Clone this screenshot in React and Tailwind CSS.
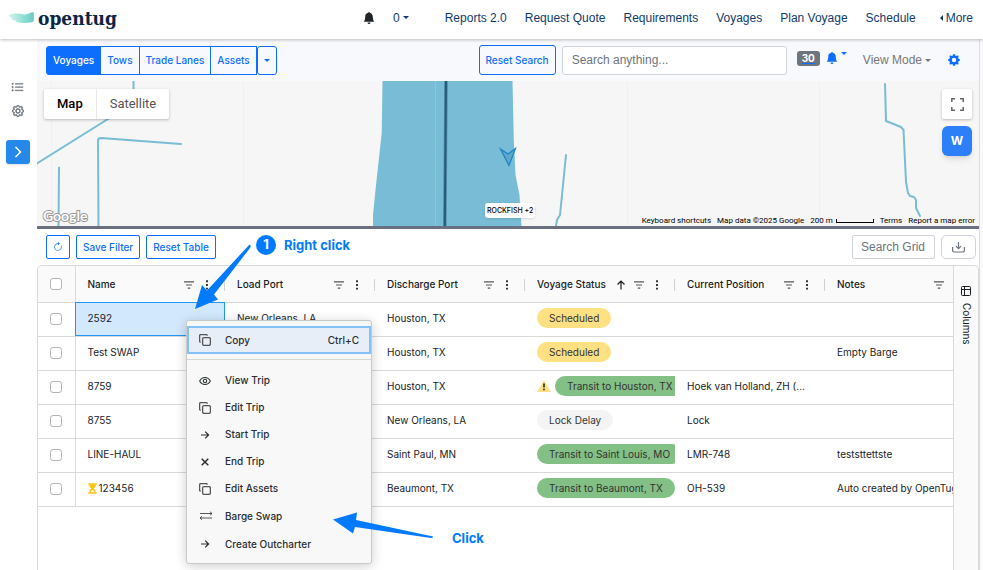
import React from "react";
import { BsBellFill, BsGear, BsGearFill, BsListUl, BsArrowClockwise } from "react-icons/bs";

const navLinks = ["Reports 2.0", "Request Quote", "Requirements", "Voyages", "Plan Voyage", "Schedule"];

const columns = ["Name", "Load Port", "Discharge Port", "Voyage Status", "Current Position", "Notes"];

const rows = [
  { name: "2592", load: "New Orleans, LA", discharge: "Houston, TX", status: "Scheduled", tone: "yellow", position: "", notes: "", selected: true },
  { name: "Test SWAP", load: "", discharge: "Houston, TX", status: "Scheduled", tone: "yellow", position: "", notes: "Empty Barge" },
  { name: "8759", load: "", discharge: "Houston, TX", status: "Transit to Houston, TX", tone: "green", warn: true, position: "Hoek van Holland, ZH (...", notes: "" },
  { name: "8755", load: "", discharge: "New Orleans, LA", status: "Lock Delay", tone: "gray", position: "Lock", notes: "" },
  { name: "LINE-HAUL", load: "", discharge: "Saint Paul, MN", status: "Transit to Saint Louis, MO", tone: "green", position: "LMR-748", notes: "teststtettste" },
  { name: "123456", load: "", discharge: "Beaumont, TX", status: "Transit to Beaumont, TX", tone: "green", waiting: true, position: "OH-539", notes: "Auto created by OpenTug" },
];

const tones = {
  yellow: "bg-[#ffe083]",
  green: "bg-[#83c086]",
  gray: "bg-[#f4f4f4]",
};

function Caret({ className = "" }) {
  return (
    <svg viewBox="0 0 6 3" className={`h-[3px] w-[6px] shrink-0 ${className}`} fill="currentColor" aria-hidden="true">
      <path d="M0 0h6L3 3z" />
    </svg>
  );
}

function FilterIcon() {
  return (
    <svg viewBox="0 0 10 8" className="h-2 w-[10px] shrink-0 text-[#555]" stroke="currentColor" strokeWidth="1.2" aria-hidden="true">
      <path d="M0 .8h10M2 4h6M3.7 7.2h2.6" />
    </svg>
  );
}

function DotsIcon() {
  return (
    <svg viewBox="0 0 4 10" className="h-[10px] w-1 shrink-0 text-[#222]" fill="currentColor" aria-hidden="true">
      <path d="M1.1.3h1.8v1.9H1.1zM1.1 4h1.8v1.9H1.1zM1.1 7.7h1.8v1.9H1.1z" />
    </svg>
  );
}

function HourglassIcon() {
  return (
    <svg viewBox="0 0 9 11" className="h-[11px] w-[9px] shrink-0" fill="#ffc107" aria-label="Waiting">
      <path d="M.3.3h8.400v1.500H.3zM.3 9.200h8.400v1.500H.3z" />
      <path d="M1.200 1.500h6.600c0 2-.9 3-2.300 4 1.400 1 2.300 2 2.300 4H6.600C6.400 8.200 5.600 7.600 4.500 7.100 3.400 7.600 2.600 8.200 2.400 9.500H1.200c0-2 .9-3 2.300-4-1.400-1-2.300-2-2.300-4z" />
    </svg>
  );
}

function CopyIcon() {
  return (
    <svg viewBox="0 0 12 12" className="h-3 w-3 text-[#555]" fill="none" stroke="currentColor" strokeWidth="1.3" aria-hidden="true">
      <rect x="3.6" y="3.6" width="7.8" height="7.8" rx="1.4" />
      <path d="M1.8 8.2H1.6A1 1 0 0 1 .6 7.200V1.600a1 1 0 0 1 1-1h5.600a1 1 0 0 1 1 1v.2" />
    </svg>
  );
}

function EyeIcon() {
  return (
    <svg viewBox="0 0 12 12" className="h-3 w-3" fill="none" stroke="currentColor" strokeWidth="1.1" aria-hidden="true">
      <path d="M.7 6C1.900 3.600 3.800 2.500 6 2.500S10.100 3.600 11.300 6C10.100 8.400 8.200 9.500 6 9.500S1.900 8.400.7 6z" />
      <circle cx="6" cy="6" r="1.700" />
    </svg>
  );
}

function ArrowIcon() {
  return (
    <svg viewBox="0 0 12 12" className="h-3 w-3" fill="none" stroke="currentColor" strokeWidth="1.2" aria-hidden="true">
      <path d="M2 6h7.600M6.200 2.600 9.600 6 6.200 9.400" />
    </svg>
  );
}

function CrossIcon() {
  return (
    <svg viewBox="0 0 12 12" className="h-3 w-3" fill="none" stroke="currentColor" strokeWidth="1.500" aria-hidden="true">
      <path d="M2.700 2.700l6.600 6.600M9.300 2.700 2.700 9.300" />
    </svg>
  );
}

function SwapIcon() {
  return (
    <svg viewBox="0 0 14 12" className="h-3 w-[14px]" fill="none" stroke="currentColor" strokeWidth=".8" aria-hidden="true">
      <path d="M1 3.500h12M11 1.700 13 3.500l-2 1.800M13 8H1M3 6.200 1 8l2 1.800" />
    </svg>
  );
}

const menuItems = [
  { label: "View Trip", icon: EyeIcon, height: "h-[27px]" },
  { label: "Edit Trip", icon: CopyIcon, height: "h-[27px]" },
  { label: "Start Trip", icon: ArrowIcon, height: "h-[27px]" },
  { label: "End Trip", icon: CrossIcon, height: "h-[27px]" },
  { label: "Edit Assets", icon: CopyIcon, height: "h-[27px]" },
  { label: "Barge Swap", icon: SwapIcon, height: "h-7" },
  { label: "Create Outcharter", icon: ArrowIcon, height: "h-7" },
];

function Header() {
  return (
    <header className="relative z-10 flex h-[39px] shrink-0 items-center bg-white pr-[10px] pl-2 font-['Liberation_Sans',sans-serif] text-[12px] text-[#0f3b6c] shadow-[0_1px_3px_rgba(0,0,0,0.25)]">
      <a href="#home" className="flex items-center gap-1 pb-1">
        <svg viewBox="0 0 26 12" className="h-3 w-[26px]" aria-hidden="true">
          <defs>
            <linearGradient id="wave" x1="0" x2="1">
              <stop offset="0" stopColor="#d3f3ec" />
              <stop offset=".6" stopColor="#8fdfd5" />
              <stop offset="1" stopColor="#68c9c4" />
            </linearGradient>
          </defs>
          <path d="M.5 3.500C3 1.500 8 1 13 2c4 .8 7 .3 9.500-1.200 2-1 3.300-.8 3.300.7v6c0 1.800-.8 2.400-2.500 2.800-5 1.200-13 .8-15.500-.8 1.500-.2 1-.9-.8-1.100C3.500 8 1.800 6.500 4.500 6.300 2.500 5.500 1 4.800.5 3.500z" fill="url(#wave)" />
        </svg>
        <span className="font-['DejaVu_Serif_Condensed','DejaVu_Serif',serif] text-[19px] leading-6 font-bold text-[#0b2545]">opentug</span>
      </a>
      <nav className="ml-auto flex items-center gap-[18px] pb-1">
        <BsBellFill className="h-3 w-3 text-[#212529]" />
        <button type="button" className="mr-[18px] flex items-center gap-[3px]">
          0 <Caret />
        </button>
        {navLinks.map((l) => (
          <a key={l} href="#nav">{l}</a>
        ))}
        <a href="#more" className="ml-[6px] flex items-center gap-[3px]">
          <svg viewBox="0 0 3 6" className="h-[6px] w-[3px]" fill="currentColor" aria-hidden="true"><path d="M3 0v6L0 3z" /></svg>
          More
        </a>
      </nav>
    </header>
  );
}

function Toolbar() {
  return (
    <div className="flex h-[42px] shrink-0 items-center bg-[#f8f9fc] pr-[19px] pl-[9px]">
      <div className="flex h-[29px] text-[10px] font-medium text-[#0d6efd]">
        <button type="button" className="rounded-l-[3px] border border-[#0d6efd] bg-[#0d6efd] px-[6px] text-white">Voyages</button>
        <button type="button" className="-ml-px border border-[#0d6efd] px-[6px]">Tows</button>
        <button type="button" className="-ml-px border border-[#0d6efd] px-[6px]">Trade Lanes</button>
        <button type="button" className="-ml-px border border-[#0d6efd] px-[6px]">Assets</button>
        <button type="button" aria-label="More views" className="rounded-[3px] border border-[#0d6efd] px-[6px]"><Caret /></button>
      </div>
      <button type="button" className="ml-auto h-[30px] rounded-[3px] border border-[#0d6efd] px-[6px] text-[10px] font-medium text-[#0d6efd]">Reset Search</button>
      <input aria-label="Search anything" placeholder="Search anything..." className="ml-[6px] h-[29px] w-[225px] rounded-[3px] border border-[#ced4da] bg-white px-[9px] font-['Liberation_Sans',sans-serif] text-[12px] placeholder:text-[#6c757d]" />
      <button type="button" className="ml-[10px] flex items-start pb-1">
        <span className="rounded-[3px] bg-[#6c757d] px-[5px] text-[10px] leading-[15px] font-bold text-white underline decoration-[#0d6efd]">30</span>
        <BsBellFill className="mt-px ml-[6px] h-3 w-3 text-[#0d6efd]" />
        <Caret className="mt-px ml-[3px] text-[#0d6efd]" />
      </button>
      <button type="button" className="ml-4 flex items-center gap-[3px] font-['Liberation_Sans',sans-serif] text-[12px] text-[#777]">View Mode <Caret /></button>
      <button type="button" aria-label="Settings" className="ml-[17px] text-[#0d6efd]"><BsGearFill className="h-3 w-3" /></button>
    </div>
  );
}

function VoyageMap() {
  return (
    <section aria-label="Map" className="relative h-[145px] shrink-0 overflow-hidden bg-[#f6f6f6]">
      <svg viewBox="37 81 942 145" preserveAspectRatio="xMidYMid slice" className="absolute inset-0 h-full w-full" fill="none" aria-hidden="true">
        <path d="M51.500 81v145M243.500 81v145M627.500 81v145M819.500 81v145" stroke="#f0f0f0" />
        <path d="M382.500 81 381.700 133 375.500 190 373 215V226H521.500L519.500 195 515.500 175 513.800 140 512.500 81z" fill="#78bdd5" />
        <path d="M435.500 81v145" stroke="#8ac6db" />
        <path d="M446 81 444.800 226" stroke="#4f8fae" strokeWidth="3.600" />
        <path d="M446 81 444.800 226" stroke="#285a7a" strokeWidth="2" />
        <g stroke="#78bdd5" strokeWidth="2" strokeLinejoin="round" strokeLinecap="round">
          <path d="M133.500 81V103L108 119 37 163.500M59 167.500 58.500 226M181 144 101 138Q98 138 98 141L98.500 226" />
          <path d="M566 155 562 195 560 215 557 220 556 226M885 84 886 121 901 127 903.500 130 906 182 908 193 910 196 914 197 916 200 916 208 920 216" />
        </g>
        <path d="M500.500 149 508 154 515.500 148.500 509 165.500z" fill="#5fa6c9" stroke="#1c83cb" strokeWidth="1.200" />
      </svg>

      <div className="absolute top-2 left-[7px] flex h-[30px] divide-x divide-[#e9e9e9] rounded-[2px] bg-white font-['Roboto',sans-serif] text-[13px] shadow-[0_1px_3px_rgba(0,0,0,0.25)]">
        <button type="button" className="px-[13px] font-medium text-black">Map</button>
        <button type="button" className="px-[13px] text-[#565656]">Satellite</button>
      </div>
      <button type="button" aria-label="Full screen" className="absolute top-2 right-[7px] flex h-[30px] w-[30px] items-center justify-center rounded-[2px] bg-white shadow-[0_1px_3px_rgba(0,0,0,0.25)]">
        <svg viewBox="0 0 13 13" className="h-[13px] w-[13px]" fill="none" stroke="#666" strokeWidth="1.500" aria-hidden="true"><path d="M.8 4V.8H4M9 .8h3.200V4M12.200 9v3.200H9M4 12.200H.8V9" /></svg>
      </button>
      <button type="button" className="absolute top-[45px] right-[7px] h-[30px] w-[30px] rounded-[6px] bg-[#2d7ff9] text-[12px] font-bold text-white shadow-md">W</button>
      <span className="absolute top-[122px] left-[448px] rounded-[3px] bg-white px-[2px] text-[7px] leading-[15px] font-medium text-black shadow">ROCKFISH +2</span>
      <span className="absolute bottom-0 left-[6px] font-['Lato',sans-serif] text-[14px] leading-5 font-bold text-white [-webkit-text-stroke:2px_#999] [paint-order:stroke_fill]">Google</span>
      <div className="absolute right-1 bottom-0 flex items-center gap-[6px] font-['Roboto',sans-serif] text-[8px] leading-[11px] text-black">
        <button type="button">Keyboard shortcuts</button>
        <span>Map data ©2025 Google</span>
        <span className="flex items-center gap-[3px]">200 m <i className="h-1 w-[38px] border border-t-0 border-black" /></span>
        <a href="#terms">Terms</a>
        <a href="#report">Report a map error</a>
      </div>
    </section>
  );
}

function GridActions() {
  const outline = "h-6 rounded-[2px] border border-[#0d6efd] px-[6px] text-[10px] font-medium text-[#0d6efd]";
  return (
    <div className="flex h-9 shrink-0 items-center gap-[6px] pr-[3px] pl-[9px]">
      <button type="button" aria-label="Refresh" className={outline}><BsArrowClockwise className="h-[10px] w-[10px]" /></button>
      <button type="button" className={outline}>Save Filter</button>
      <button type="button" className={outline}>Reset Table</button>
      <input aria-label="Search Grid" placeholder="Search Grid" className="ml-auto h-6 w-[83px] rounded-[2px] border border-[#ced4da] px-[8px] font-['Liberation_Sans',sans-serif] text-[12px] placeholder:text-[#6c757d]" />
      <button type="button" aria-label="Download" className="flex h-6 w-[35px] items-center justify-center rounded-[5px] border border-[#d0d3dc] text-[#6c757d]">
        <svg viewBox="0 0 13 12" className="h-3 w-[13px]" fill="none" stroke="currentColor" strokeWidth="1.200" aria-hidden="true"><path d="M.6 6v3.600q0 1.400 1.400 1.400h9q1.400 0 1.400-1.400V6M6.500 1v6.500M4 5.200l2.500 2.500L9 5.200" /></svg>
      </button>
    </div>
  );
}

function Check({ label }) {
  return <input type="checkbox" aria-label={label} className="ml-3 block h-3 w-3 appearance-none rounded-[3px] border border-[#b5b5b5] bg-white" />;
}

function VoyageTable() {
  return (
    <table className="w-full table-fixed border-collapse text-left text-[10px] text-[#181d1f]">
      <colgroup>
        <col className="w-[37px]" />
        <col className="w-[150px]" />
        <col className="w-[150px]" />
        <col className="w-[150px]" />
        <col className="w-[150px]" />
        <col className="w-[150px]" />
        <col />
      </colgroup>
      <thead>
        <tr className="h-9 border-b border-[#d9d9d9] bg-[#fafafa]">
          <th className="border-r border-[#d9d9d9] p-0"><Check label="Select all" /></th>
          {columns.map((c, i) => (
            <th key={c} className="p-0 pt-0.5 font-medium">
              <div className={`flex h-3 items-center gap-[11px] pl-3 ${i === 5 ? "pr-[9px]" : "border-r border-[#d0d0d0] pr-[15px]"}`}>
                <span className="flex-1 whitespace-nowrap">{c}</span>
                {i === 3 && (
                  <svg viewBox="0 0 10 10" className="-mx-[3px] h-[10px] w-[10px] shrink-0" fill="none" stroke="currentColor" strokeWidth="1.200" aria-label="Sorted ascending"><path d="M5 9.500V1M1.500 4.500 5 1l3.500 3.500" /></svg>
                )}
                <FilterIcon />
                {i !== 5 && <DotsIcon />}
              </div>
            </th>
          ))}
        </tr>
      </thead>
      <tbody>
        {rows.map((r) => (
          <tr key={r.name} className="h-[34px] border-b border-[#d9d9d9]">
            <td className="border-r border-[#d9d9d9] p-0"><Check label={`Select ${r.name}`} /></td>
            <td className={`p-0 pb-0.5 pl-3 ${r.selected ? "bg-[#d2e8fd] outline outline-1 -outline-offset-1 outline-[#2196f3]" : ""}`}>
              <span className="flex items-center gap-[2px]">
                {r.waiting && <HourglassIcon />}
                {r.name}
              </span>
            </td>
            <td className="p-0 pb-0.5 pl-3">{r.load}</td>
            <td className="p-0 pb-0.5 pl-3">{r.discharge}</td>
            <td className="p-0 pb-0.5 pl-3">
              <div className="flex items-center gap-1 overflow-hidden whitespace-nowrap">
                {r.warn && (
                  <svg viewBox="0 0 14 12" className="h-3 w-[14px] shrink-0" aria-label="Warning"><path d="M7 0 14 12H0z" fill="#ffe083" /><path d="M7 3.500v4M7 8.700v1.500" stroke="#222" strokeWidth="1.600" /></svg>
                )}
                <span className={`rounded-full px-3 leading-5 text-[#333] ${tones[r.tone]}`}>{r.status}</span>
              </div>
            </td>
            <td className="p-0 pb-0.5 pl-3">{r.position}</td>
            <td className="overflow-hidden p-0 pb-0.5 pl-3 whitespace-nowrap">{r.notes}</td>
          </tr>
        ))}
      </tbody>
    </table>
  );
}

function ContextMenu() {
  return (
    <div role="menu" className="absolute top-[54px] left-[148px] w-[186px] rounded-[3px] border border-[#c9c9c9] bg-[#f8f8f8] py-[5px] text-[10px] font-medium text-[#2a2e30] shadow-[0_2px_12px_rgba(0,0,0,0.2)]">
      <button type="button" role="menuitem" className="flex h-7 w-full items-center border-2 border-[#85c1f5] bg-[#e8eef8] pr-[10px] pl-[10px]">
        <span className="flex w-[26px]"><CopyIcon /></span>Copy<span className="ml-auto">Ctrl+C</span>
      </button>
      <hr className="mt-[5px] mb-[7px] border-[#d5d5d5]" />
      {menuItems.map(({ label, icon: Icon, height }) => (
        <button key={label} type="button" role="menuitem" className={`flex w-full items-center pl-3 ${height}`}>
          <span className="flex w-[26px]"><Icon /></span>{label}
        </button>
      ))}
    </div>
  );
}

function Annotations() {
  return (
    <div className="pointer-events-none absolute inset-0 z-20 text-[13px] font-bold text-[#007bff]">
      <svg width="983" height="570" viewBox="0 0 983 570" className="absolute top-0 left-0" fill="#007bff" aria-hidden="true">
        <path d="M249.500 244.500Q251.500 245.500 250 248L214 294.500 218 299.500 195 309 202 285 207 290.500z" />
        <path d="M433 536.500Q433 538.500 431 538L355 527 353 533.500 333 519.500 357 512.500 356 520z" />
      </svg>
      <span className="absolute top-[235px] left-64 flex h-5 w-5 items-center justify-center rounded-full bg-[#007bff] text-white">1</span>
      <span className="absolute top-[235px] left-[284px] leading-5">Right click</span>
      <span className="absolute top-[528px] left-[452px] leading-5">Click</span>
    </div>
  );
}

export default function App() {
  return (
    <div className="relative flex h-screen flex-col overflow-hidden bg-white font-['Inter',sans-serif]">
      <Header />
      <div className="flex min-h-0 flex-1 bg-[#fafafa]">
        <aside className="flex w-[37px] shrink-0 flex-col items-center bg-white pt-[42px] pr-[2px] text-[#6c757d]">
          <button type="button" aria-label="List"><BsListUl strokeWidth=".5" className="h-[13px] w-[13px]" /></button>
          <button type="button" aria-label="Preferences" className="mt-[11px]"><BsGear stroke="currentColor" strokeWidth=".9" className="h-3 w-3" /></button>
          <button type="button" aria-label="Expand" className="mt-[23px] flex h-6 w-6 items-center justify-center rounded-[3px] bg-[#2688eb] text-white shadow">
            <svg viewBox="0 0 8 12" className="h-3 w-2" fill="none" stroke="currentColor" strokeWidth="1.500" aria-hidden="true"><path d="M1.500 1 6.500 6l-5 5" /></svg>
          </button>
        </aside>
        <main className="mr-[3px] flex min-w-0 flex-1 flex-col border-r border-[#dedede] bg-white">
          <Toolbar />
          <VoyageMap />
          <div className="h-[3px] shrink-0 bg-[#6b7080]" />
          <GridActions />
          <div className="relative flex min-h-0 flex-1 rounded-t-[5px] border border-b-0 border-[#d9d9d9]">
            <div className="min-w-0 flex-1 overflow-hidden rounded-tl-[5px]"><VoyageTable /></div>
            <div className="w-[25px] shrink-0 rounded-tr-[5px] border-l border-[#d9d9d9] bg-[#fafafa] pt-5">
              <button type="button" className="flex w-full flex-col items-center gap-[7px] text-[10px] text-[#181d1f]">
                <svg viewBox="0 0 10 10" className="h-[10px] w-[10px]" fill="none" stroke="currentColor" aria-hidden="true"><rect x=".5" y=".5" width="9" height="9" rx="1" /><path d="M.5 3.500h9M3.500.5v9" /></svg>
                <span className="[writing-mode:vertical-rl]">Columns</span>
              </button>
            </div>
            <ContextMenu />
          </div>
        </main>
      </div>
      <Annotations />
    </div>
  );
}
